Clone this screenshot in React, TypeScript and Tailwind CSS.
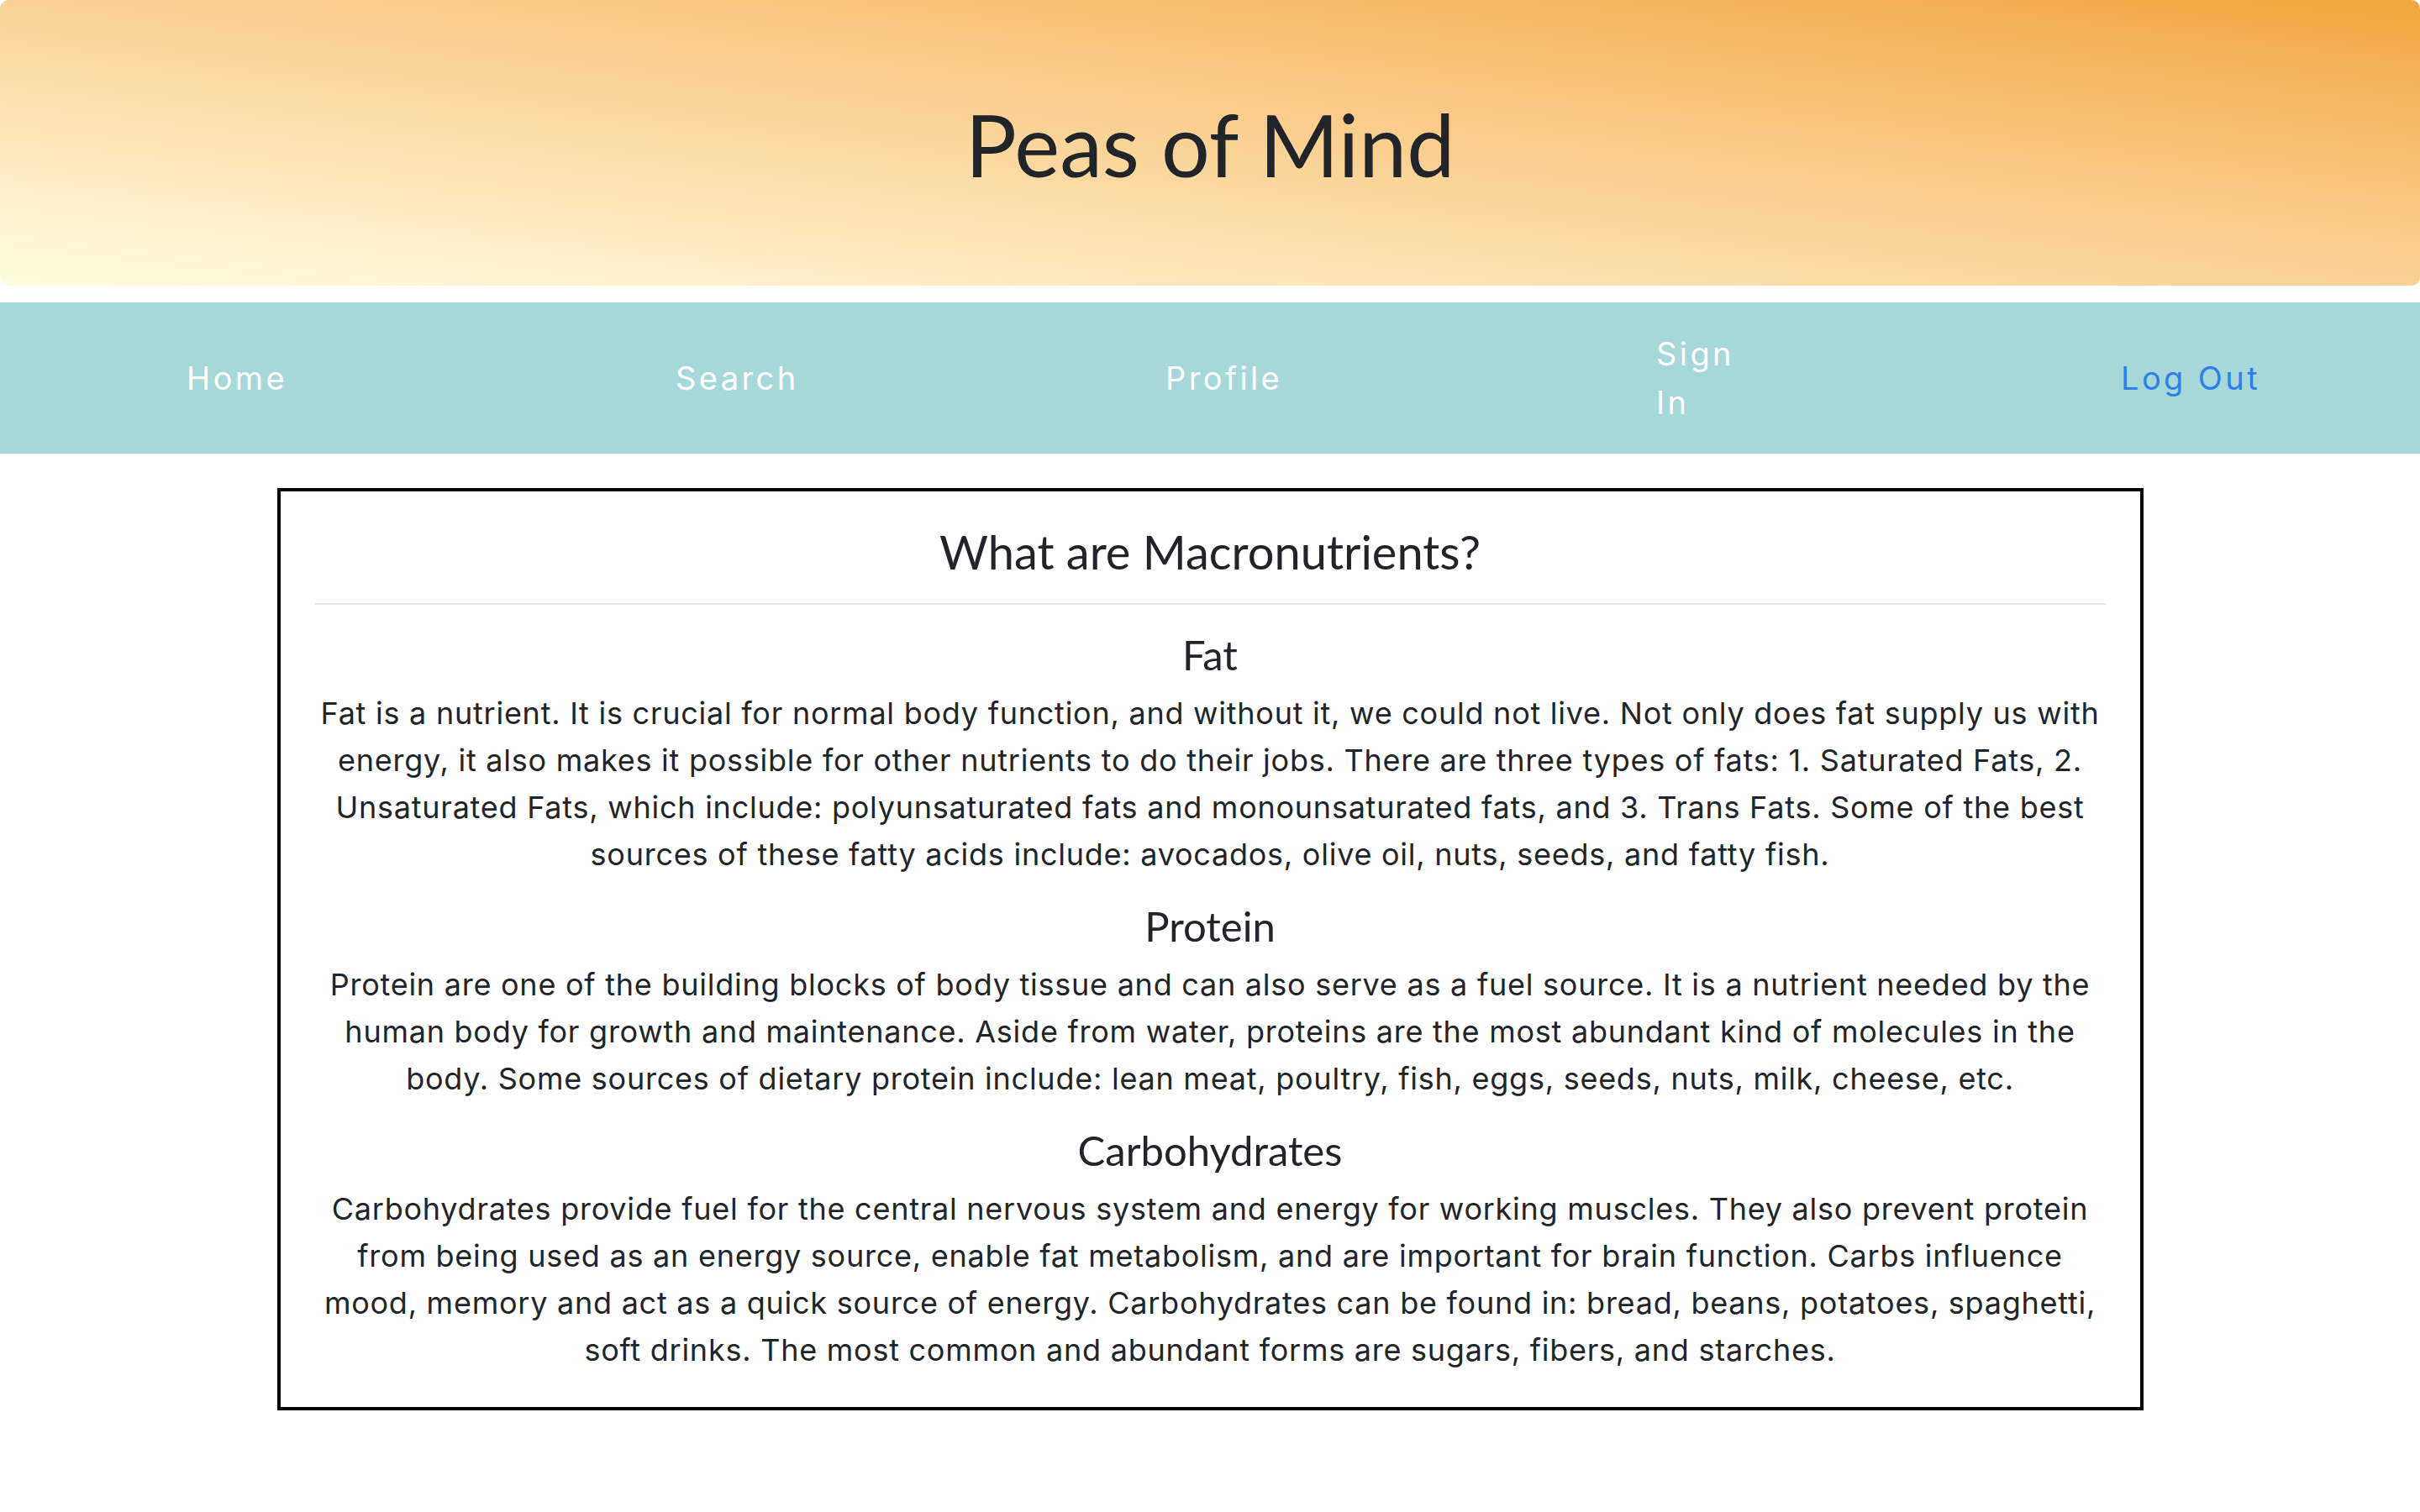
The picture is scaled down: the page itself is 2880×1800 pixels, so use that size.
const sections = [
  {
    title: "Fat",
    body: "Fat is a nutrient. It is crucial for normal body function, and without it, we could not live. Not only does fat supply us with energy, it also makes it possible for other nutrients to do their jobs. There are three types of fats: 1. Saturated Fats, 2. Unsaturated Fats, which include: polyunsaturated fats and monounsaturated fats, and 3. Trans Fats. Some of the best sources of these fatty acids include: avocados, olive oil, nuts, seeds, and fatty fish.",
  },
  {
    title: "Protein",
    body: "Protein are one of the building blocks of body tissue and can also serve as a fuel source. It is a nutrient needed by the human body for growth and maintenance. Aside from water, proteins are the most abundant kind of molecules in the body. Some sources of dietary protein include: lean meat, poultry, fish, eggs, seeds, nuts, milk, cheese, etc.",
  },
  {
    title: "Carbohydrates",
    body: "Carbohydrates provide fuel for the central nervous system and energy for working muscles. They also prevent protein from being used as an energy source, enable fat metabolism, and are important for brain function. Carbs influence mood, memory and act as a quick source of energy. Carbohydrates can be found in: bread, beans, potatoes, spaghetti, soft drinks. The most common and abundant forms are sugars, fibers, and starches.",
  },
];

export default function App() {
  return (
    <div className="min-h-screen bg-white font-['Inter',sans-serif] text-[#212529]">
      {/* banner */}
      <header className="flex h-[340px] items-center justify-center rounded-[10px] bg-linear-to-tr from-[#fffde0] to-[#f2a63b]">
        <h1 className="mt-[4px] font-['Lato',sans-serif] text-[102px] leading-[1.2] font-normal">
          Peas of Mind
        </h1>
      </header>

      {/* nav */}
      <nav className="mt-[20px] flex h-[180px] items-center bg-[#a7d8d9] pl-[222px] text-[38px] leading-[58px] tracking-[3.4px] text-white">
        <a className="w-[582px]">Home</a>
        <a className="w-[583px]">Search</a>
        <a className="w-[584px]">Profile</a>
        <a className="w-[130px]">Sign In</a>
        <a className="ml-[423px] text-[#2f7fe8]">Log Out</a>
      </nav>

      {/* content */}
      <main className="mx-auto mt-[41px] w-[2221px] border-4 border-black px-[41px] pt-[38px] pb-[40px] text-center">
        <h3 className="font-['Lato',sans-serif] text-[56px] leading-[67px] font-normal">
          What are Macronutrients?
        </h3>
        <hr className="mt-[28px] border-t-2 border-[#e6e6e6]" />
        {sections.map((s, i) => (
          <section key={s.title} className={i === 0 ? "mt-[30px]" : "mt-[28px]"}>
            <h4 className="font-['Lato',sans-serif] text-[49px] leading-[58px] font-normal">
              {s.title}
            </h4>
            <p className="mt-[13px] text-[36px] leading-[56px] tracking-[0.75px]">{s.body}</p>
          </section>
        ))}
      </main>
    </div>
  );
}
